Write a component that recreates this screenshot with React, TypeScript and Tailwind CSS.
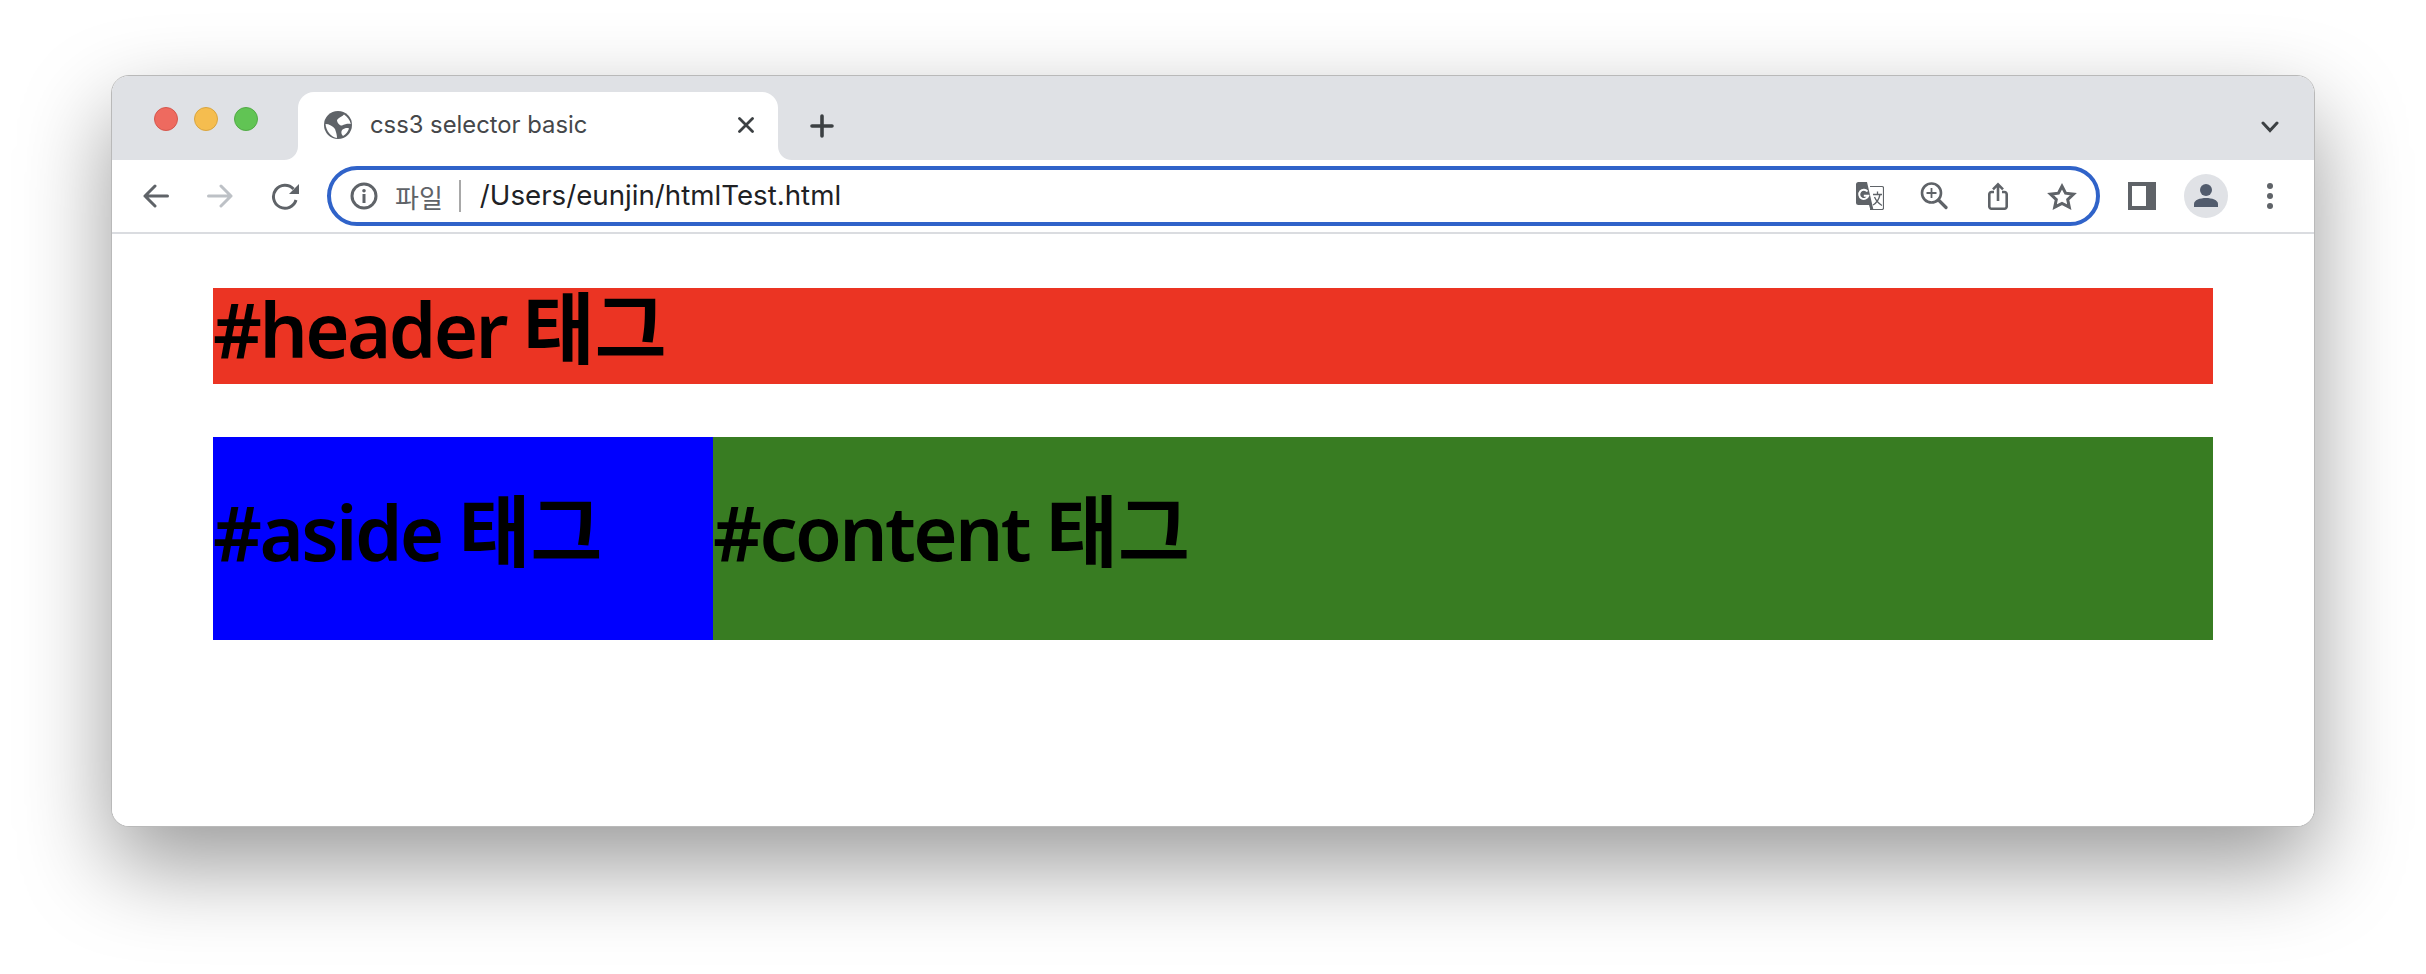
const uiFont = "font-['Inter','Liberation_Sans',sans-serif]";

function TrafficLight({ color }: { color: string }) {
  return <span className={`w-6 h-6 rounded-full border ${color}`} />;
}

function Globe() {
  return (
    <svg viewBox="0 0 28 28" className="w-7 h-7 shrink-0">
      <circle cx="14" cy="14" r="14" fill="#5f6368" />
      <path d="M13 9C15 6 18 6 20 3.500 23 5.500 26 9 26.800 13 24 12.500 21 13 18 14.500 16 15 13 12 13 9z" fill="#fff" />
      <path d="M1.500 13C5 13 9 15 11 18c1 3 2 6 2 9C7 26 2 20 1.500 13z" fill="#fff" />
      <path d="M18 19c3-2 5-2.500 7-1.500-1 3-3 6-6 7.500-2-2-2-4-1-6z" fill="#fff" />
    </svg>
  );
}

function BackIcon({ color }: { color: string }) {
  return (
    <svg viewBox="0 0 26 24" className={`w-[26px] h-6 shrink-0 ${color}`} fill="none" stroke="currentColor" strokeWidth="3" strokeLinecap="round" strokeLinejoin="round">
      <path d="M24.500 12H2M12 2 2 12l10 10" />
    </svg>
  );
}

function ForwardIcon({ color }: { color: string }) {
  return (
    <svg viewBox="0 0 26 24" className={`w-[26px] h-6 shrink-0 ${color}`} fill="none" stroke="currentColor" strokeWidth="3" strokeLinecap="round" strokeLinejoin="round">
      <path d="M1.500 12H24M14 2l10 10-10 10" />
    </svg>
  );
}

function ReloadIcon() {
  return (
    <svg viewBox="0 0 28 28" className="w-7 h-7 shrink-0">
      <path d="M22.500 7A11.500 11.500 0 1 0 25 18" fill="none" stroke="#5f6368" strokeWidth="3" />
      <path d="M28 2v10H18z" fill="#5f6368" />
    </svg>
  );
}

function InfoIcon() {
  return (
    <svg viewBox="0 0 30 30" className="w-[30px] h-[30px] shrink-0">
      <circle cx="15" cy="15" r="12" fill="none" stroke="#5f6368" strokeWidth="3" />
      <circle cx="15" cy="9.800" r="1.800" fill="#5f6368" />
      <path d="M13.500 13h3v9h-3z" fill="#5f6368" />
    </svg>
  );
}

function TranslateIcon() {
  return (
    <svg viewBox="0 0 28 28" className="w-7 h-7 shrink-0">
      <path d="M14 4.500h12a1.500 1.500 0 0 1 1.500 1.500v20a1.500 1.500 0 0 1-1.500 1.500H14" fill="none" stroke="#5f6368" strokeWidth="1.200" />
      <path d="M0 2.500A2.500 2.500 0 0 1 2.500 0H11l6.500 28h-3l-1.500-5H2.500A2.500 2.500 0 0 1 0 20.500z" fill="#5f6368" />
      <path d="M11.500 9.500a4.600 4.600 0 1 0 .7 4.300H7.800" fill="none" stroke="#fff" strokeWidth="2" />
      <path d="M17 12.500h9M21.500 9.500v3M24 12.500c-1 5-3.500 8.500-7 10.500M18.500 15c1.500 3.500 4 6.500 7.500 8.500" fill="none" stroke="#5f6368" strokeWidth="1.300" />
    </svg>
  );
}

function ZoomIcon() {
  return (
    <svg viewBox="0 0 28 28" className="w-7 h-7 shrink-0" fill="none" stroke="#5f6368">
      <circle cx="11.500" cy="11" r="9.500" strokeWidth="2.600" />
      <path d="M18.500 18 26 25.500" strokeWidth="3.200" strokeLinecap="round" />
      <path d="M11.500 6v10M6.500 11h10" strokeWidth="1.800" />
    </svg>
  );
}

function ShareIcon() {
  return (
    <svg viewBox="0 0 20 28" className="w-5 h-7 shrink-0" fill="none" stroke="#5f6368" strokeWidth="2.600">
      <path d="M6 10H3.500A2.200 2.200 0 0 0 1.300 12.200v12.300a2.200 2.200 0 0 0 2.200 2.200h13a2.200 2.200 0 0 0 2.200-2.200V12.200A2.200 2.200 0 0 0 16.500 10H14" />
      <path d="M10 19V2.500M5 7.300 10 2.300l5 5" />
    </svg>
  );
}

function StarIcon() {
  return (
    <svg viewBox="0 0 30 28" className="w-[30px] h-7 shrink-0">
      <path d="M15 4.200 18.600 11.200 26.500 12.200 20.700 17.600 22.300 25.200 15 21.400 7.700 25.200 9.300 17.600 3.500 12.200 11.400 11.200z" fill="none" stroke="#5f6368" strokeWidth="3" />
    </svg>
  );
}

function SidePanelIcon() {
  return (
    <svg viewBox="0 0 28 28" className="w-7 h-7 shrink-0">
      <path d="M0 0h28v28H0zM4 4v20h14V4z" fill="#5f6368" fillRule="evenodd" />
    </svg>
  );
}

function Avatar() {
  return (
    <span className="w-11 h-11 rounded-full bg-[#e0e2e6] flex items-center justify-center shrink-0">
      <svg viewBox="0 0 24 24" className="w-6 h-6">
        <circle cx="12" cy="6" r="6" fill="#525c6d" />
        <path d="M0 23v-3c0-4 6-6 12-6s12 2 12 6v3z" fill="#525c6d" />
      </svg>
    </span>
  );
}

function DotsIcon() {
  return (
    <svg viewBox="0 0 6 26" className="w-[6px] h-[26px] shrink-0">
      <circle cx="3" cy="3" r="3" fill="#5f6368" />
      <circle cx="3" cy="13" r="3" fill="#5f6368" />
      <circle cx="3" cy="23" r="3" fill="#5f6368" />
    </svg>
  );
}

function TabStrip() {
  return (
    <div className="h-[84px] shrink-0 bg-[#dfe1e5] flex items-start">
      <div className="w-[186px] pt-[31px] pl-[42px] flex gap-[16px] shrink-0">
        <TrafficLight color="bg-[#ee6a5f] border-[#d5574d]" />
        <TrafficLight color="bg-[#f5bd4f] border-[#d9a53f]" />
        <TrafficLight color="bg-[#61c454] border-[#52aa46]" />
      </div>
      <div className="relative mt-[16px] w-[480px] h-[68px] bg-white rounded-t-[16px] flex items-center pl-[26px] pr-[24px] pb-[2px] shrink-0">
        <svg viewBox="0 0 14 14" className="absolute w-[14px] h-[14px] bottom-0 left-[-14px]"><path d="M14 0v14H0c8 0 14-6 14-14z" fill="#fff" /></svg>
        <svg viewBox="0 0 14 14" className="absolute w-[14px] h-[14px] bottom-0 right-[-14px]"><path d="M0 0v14h14C6 14 0 8 0 0z" fill="#fff" /></svg>
        <Globe />
        <span className={`ml-[18px] text-[23.800px] text-[#45474a] flex-1 ${uiFont}`}>css3 selector basic</span>
        <svg viewBox="0 0 16 16" className="w-4 h-4 shrink-0" fill="none" stroke="#3c4043" strokeWidth="2.800" strokeLinecap="round">
          <path d="M1.500 1.500l13 13M14.500 1.500l-13 13" />
        </svg>
      </div>
      <svg viewBox="0 0 24 24" className="ml-[32px] mt-[38px] w-6 h-6 shrink-0" fill="none" stroke="#3c4043" strokeWidth="3.600" strokeLinecap="round">
        <path d="M12 2v20M2 12h20" />
      </svg>
      <svg viewBox="0 0 18 12" className="ml-auto mr-[35px] mt-[45px] w-[18px] h-3 shrink-0" fill="none" stroke="#3c4043" strokeWidth="3" strokeLinecap="round">
        <path d="M2 2l7 7.500L16 2" />
      </svg>
    </div>
  );
}

function Toolbar() {
  return (
    <div className="h-[74px] shrink-0 bg-white border-b-2 border-[#dadce0] flex items-center pl-[31px]">
      <BackIcon color="text-[#5f6368]" />
      <span className="ml-[38px]"><ForwardIcon color="text-[#bdc1c6]" /></span>
      <span className="ml-[38px]"><ReloadIcon /></span>
      <div className="ml-[28px] w-[1773px] h-[60px] rounded-full border-[4px] border-[#3063c9] flex items-center pl-[18px] pr-[19px] shrink-0">
        <InfoIcon />
        <span className="ml-[16px] text-[26px] text-[#5f6368] font-['Noto_Sans_CJK_KR',sans-serif]">파일</span>
        <span className="ml-[16px] w-[2px] h-8 bg-[#a8a8a8] shrink-0" />
        <span className={`ml-[19px] text-[27.700px] text-[#202124] flex-1 ${uiFont}`}>/Users/eunjin/htmlTest.html</span>
        <TranslateIcon />
        <span className="ml-[36px]"><ZoomIcon /></span>
        <span className="ml-[40px]"><ShareIcon /></span>
        <span className="ml-[39px]"><StarIcon /></span>
      </div>
      <span className="ml-[28px]"><SidePanelIcon /></span>
      <span className="ml-[28px]"><Avatar /></span>
      <span className="ml-[39px]"><DotsIcon /></span>
    </div>
  );
}

function Heading({ latin }: { latin: string }) {
  return (
    <h1 className="pb-[16px] text-[76px] leading-none font-semibold tracking-[-0.035em] text-black font-['Noto_Sans','Noto_Sans_CJK_KR',sans-serif] whitespace-nowrap">
      {latin} <span className="text-[78px] tracking-normal">태그</span>
    </h1>
  );
}

export default function App() {
  return (
    <div className="w-[2426px] h-[974px] bg-white pt-[75px] pl-[111px] overflow-hidden">
      <div className="w-[2204px] h-[752px] rounded-[18px] overflow-hidden bg-white border border-[#b9b9b9] shadow-[0_38px_90px_rgba(0,0,0,0.4)] flex flex-col">
        <TabStrip />
        <Toolbar />
        <main className="flex-1 bg-white pt-[54px] pl-[101px]">
          <div className="w-[2000px] h-[96px] bg-[#eb3423] flex items-center">
            <Heading latin="#header" />
          </div>
          <div className="mt-[53px] w-[2000px] h-[203px] flex">
            <div className="w-[500px] bg-[#0000ff] flex items-center"><Heading latin="#aside" /></div>
            <div className="flex-1 bg-[#387c22] flex items-center"><Heading latin="#content" /></div>
          </div>
        </main>
      </div>
    </div>
  );
}
